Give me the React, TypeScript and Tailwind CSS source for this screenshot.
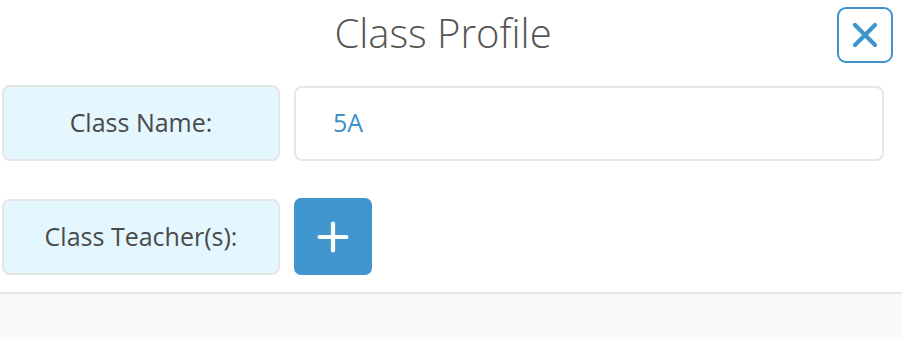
import { X, Plus } from "lucide-react";

export default function App() {
  const font = { fontFamily: '"Open Sans", "Liberation Sans", sans-serif' };
  return (
    <div className="flex h-[340px] w-[902px] flex-col bg-white" style={font}>
      <div className="flex-1">
        <header className="relative flex h-[70px] items-start justify-center pr-4 pt-[9px]">
          <h1 className="text-[40px] font-light leading-[48px] text-[#555]">Class Profile</h1>
          <button
            type="button"
            aria-label="Close"
            className="absolute right-[9px] top-[7px] grid h-[56px] w-[56px] place-items-center rounded-[9px] border-2 border-[#3d94cf] text-[#3d94cf]"
          >
            <X size={40} strokeWidth={2.5} />
          </button>
        </header>

        <div className="flex flex-col gap-[37px] pl-[2px] pt-[15px]">
          <div className="flex items-center gap-[14px]">
            <div className="grid h-[76px] w-[278px] place-items-center rounded-[8px] border-2 border-[#e6e6e6] bg-[#e4f7fe] text-[25px] text-[#4a4a4a]">
              Class Name:
            </div>
            <div className="flex h-[75px] w-[590px] items-center rounded-[8px] border-2 border-[#e6e6e6] bg-white px-[37px] text-[25px] text-[#3b8fca]">
              5A
            </div>
          </div>

          <div className="flex items-center gap-[14px]">
            <div className="grid h-[76px] w-[278px] place-items-center rounded-[8px] border-2 border-[#e6e6e6] bg-[#e4f7fe] text-[25px] text-[#4a4a4a]">
              Class Teacher(s):
            </div>
            <button
              type="button"
              aria-label="Add teacher"
              className="grid h-[77px] w-[78px] place-items-center rounded-[7px] bg-[#4196cd] text-white"
            >
              <Plus size={46} strokeWidth={2.2} />
            </button>
          </div>
        </div>
      </div>
      <div className="h-[48px] border-t-2 border-[#e6e6e6] bg-[#fafafa]" />
    </div>
  );
}
